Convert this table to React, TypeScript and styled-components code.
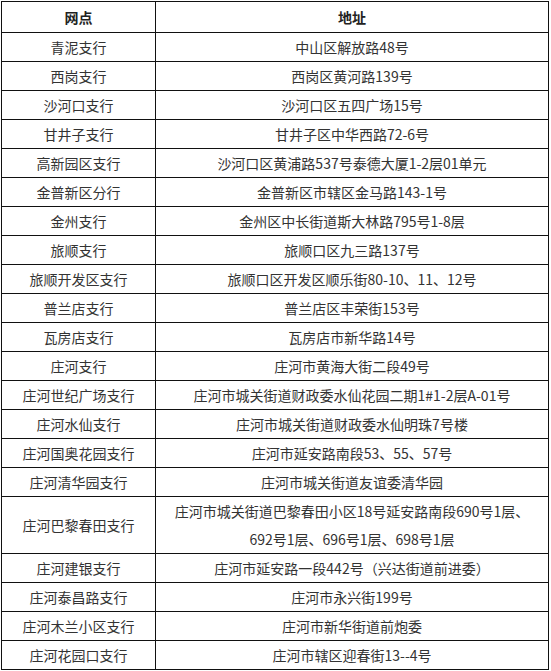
import React from 'react'
import styled, { createGlobalStyle } from 'styled-components'

const GlobalStyle = createGlobalStyle`
  html, body {
    margin: 0;
    padding: 0;
    background: #ffffff;
  }
  body {
    font-family: 'Noto Sans CJK SC', 'Microsoft YaHei', sans-serif;
  }
`

const Page = styled.div`
  padding: 1px 0 0 1px;
`

const Table = styled.table`
  width: 548px;
  border-collapse: collapse;
  table-layout: fixed;
  color: #333333;
  font-size: 14px;
`

const HeadCell = styled.th`
  border: 1px solid #111111;
  padding: 0;
  line-height: 30px;
  font-weight: 700;
  color: #222222;
  text-align: center;
`

const Cell = styled.td`
  border: 1px solid #111111;
  padding: 0;
  line-height: 28px;
  font-weight: 400;
  text-align: center;
  vertical-align: middle;
`

const branches: [string, string][] = [
  ['青泥支行', '中山区解放路48号'],
  ['西岗支行', '西岗区黄河路139号'],
  ['沙河口支行', '沙河口区五四广场15号'],
  ['甘井子支行', '甘井子区中华西路72-6号'],
  ['高新园区支行', '沙河口区黄浦路537号泰德大厦1-2层01单元'],
  ['金普新区分行', '金普新区市辖区金马路143-1号'],
  ['金州支行', '金州区中长街道斯大林路795号1-8层'],
  ['旅顺支行', '旅顺口区九三路137号'],
  ['旅顺开发区支行', '旅顺口区开发区顺乐街80-10、11、12号'],
  ['普兰店支行', '普兰店区丰荣街153号'],
  ['瓦房店支行', '瓦房店市新华路14号'],
  ['庄河支行', '庄河市黄海大街二段49号'],
  ['庄河世纪广场支行', '庄河市城关街道财政委水仙花园二期1#1-2层A-01号'],
  ['庄河水仙支行', '庄河市城关街道财政委水仙明珠7号楼'],
  ['庄河国奥花园支行', '庄河市延安路南段53、55、57号'],
  ['庄河清华园支行', '庄河市城关街道友谊委清华园'],
  ['庄河巴黎春田支行', '庄河市城关街道巴黎春田小区18号延安路南段690号1层、\n692号1层、696号1层、698号1层'],
  ['庄河建银支行', '庄河市延安路一段442号（兴达街道前进委）'],
  ['庄河泰昌路支行', '庄河市永兴街199号'],
  ['庄河木兰小区支行', '庄河市新华街道前炮委'],
  ['庄河花园口支行', '庄河市辖区迎春街13--4号']
]

const App = () => {
  return (
    <Page>
      <GlobalStyle />
      <Table>
        <colgroup>
          <col style={{ width: '154px' }} />
          <col />
        </colgroup>
        <thead>
          <tr>
            <HeadCell>网点</HeadCell>
            <HeadCell>地址</HeadCell>
          </tr>
        </thead>
        <tbody>
          {branches.map(([name, address]) => (
            <tr key={name}>
              <Cell>{name}</Cell>
              <Cell>
                {address.split('\n').map((line, idx) => (
                  <div key={idx}>{line}</div>
                ))}
              </Cell>
            </tr>
          ))}
        </tbody>
      </Table>
    </Page>
  )
}

export default App
